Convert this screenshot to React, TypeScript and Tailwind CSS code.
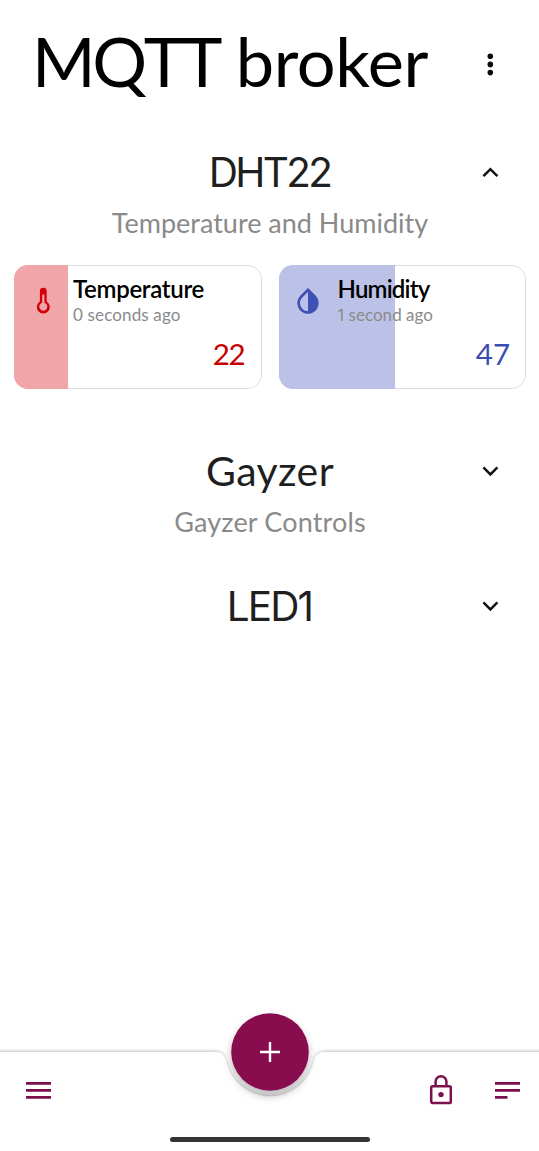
import type { ReactNode } from 'react';

function Chevron({ up = false }: { up?: boolean }) {
  return (
    <svg width="20" height="14" viewBox="0 0 20 14" fill="none" stroke="#111" strokeWidth="2.5">
      <path d={up ? 'M3.4 11.2 L10.4 4.2 L17.4 11.2' : 'M3.4 3.4 L10.4 10.4 L17.4 3.4'} />
    </svg>
  );
}

function GroupHeader({ title, subtitle, open = false }: { title: ReactNode; subtitle?: ReactNode; open?: boolean }) {
  return (
    <header className="text-center">
      <div className="flex h-[50px] items-center">
        <div className="w-[98px] shrink-0" />
        <h2 className="grow whitespace-nowrap pt-[3px] text-[41px] leading-[50px] text-[#1f1f1f]">{title}</h2>
        <button className="flex w-[98px] shrink-0 justify-center pt-1" aria-label="Toggle">
          <Chevron up={open} />
        </button>
      </div>
      {subtitle && <p className="mt-2.5 pl-px text-[27px] leading-9 text-[#8a8a8a]">{subtitle}</p>}
    </header>
  );
}

type CardProps = {
  name: ReactNode;
  age: ReactNode;
  value: ReactNode;
  icon: ReactNode;
  fill: string;
  valueColor: string;
};

function Card({ name, age, value, icon, fill, valueColor }: CardProps) {
  return (
    <article className="relative h-[124px] w-[247.5px] overflow-hidden rounded-[14px]">
      <div className="absolute inset-0 rounded-[14px] border border-[#dcdcdc]" />
      <div className={`absolute inset-y-0 left-0 ${fill}`} />
      <div className="relative flex h-full">
        <div className="flex w-[59px] justify-center pt-5">{icon}</div>
        <div className="flex grow flex-col whitespace-nowrap pt-2.5">
          <h3 className="text-[24px] font-semibold leading-[28px] text-black">{name}</h3>
          <p className="mt-0.5 text-[17px] leading-[20px] text-[#8a8a8a]">{age}</p>
          <p className={`mt-3 text-right text-[29.5px] leading-[34px] ${valueColor}`}>{value}</p>
        </div>
      </div>
    </article>
  );
}

export default function App() {
  return (
    <div className="flex h-[1151px] w-[539px] flex-col overflow-hidden bg-white font-['Lato','Inter',sans-serif]">
      <div className="flex h-[145px] items-start">
        <h1 className="w-[441px] whitespace-nowrap pl-[32px] pt-[21px] text-[68.5px] leading-[80px] text-black">
          <span className="tracking-[-3.4px]">MQ</span>
          <span className="tracking-[-2px]">TT</span>
          <span className="tracking-[-2.4px]"> </span>
          <span className="tracking-[-0.4px]">broker</span>
        </h1>
        <button className="flex w-[98px] justify-center pt-[50px]" aria-label="More">
          <svg width="8" height="28" viewBox="0 0 8 28" fill="#0a0a0a">
            <circle cx="4.3" cy="6.2" r="2.8" />
            <circle cx="4.3" cy="14.4" r="2.8" />
            <circle cx="4.3" cy="22.6" r="2.8" />
          </svg>
        </button>
      </div>

      <section>
        <GroupHeader
          open
          title={<span className="relative top-px font-['Inter'] text-[40.5px] tracking-[-2.7px]">DHT22</span>}
          subtitle="Temperature and Humidity"
        />
        <div className="mt-6 flex justify-between pl-3.5 pr-[13px]">
          <Card
            name={<span className="tracking-[-0.3px]">Temperature</span>}
            age={<span className="tracking-[0.15px]">0 seconds ago</span>}
            value={<span className="pr-[17px] tracking-[-1.2px]">22</span>}
            fill="w-[54px] bg-[#f0a6a8]"
            valueColor="text-[#c80000]"
            icon={
              <svg width="32" height="32" viewBox="0 0 32 32">
                <path
                  d="M11.9 16.4 V6.2 a3.4 3.4 0 0 1 6.8 0 V16.4 a6.5 6.5 0 1 1 -6.8 0 Z M14.2 9.6 V17.8 a4 4 0 1 0 2.2 0 V9.6 Z"
                  fill="#d50008"
                  fillRule="evenodd"
                />
              </svg>
            }
          />
          <Card
            name={<span className="tracking-[-0.8px]">Humidity</span>}
            age={
              <span className="tracking-[0.05px]">
                <span className="font-['Inter'] text-[16px]">1</span> second ago
              </span>
            }
            value={<span className="pr-[16px]">47</span>}
            fill="w-[116.5px] bg-[#bcc2e7]"
            valueColor="text-[#3a4db0]"
            icon={
              <svg width="32" height="32" viewBox="0 0 24 24" fill="#3f51b5">
                <path d="M17.66 7.93 12 2.27 6.34 7.93c-3.12 3.12-3.12 8.19 0 11.31C7.9 20.8 9.95 21.58 12 21.58s4.1-.78 5.66-2.34c3.12-3.12 3.12-8.19 0-11.31zM12 19.59c-1.6 0-3.11-.62-4.24-1.76C6.62 16.69 6 15.19 6 13.59s.62-3.11 1.76-4.24L12 5.1v14.49z" />
              </svg>
            }
          />
        </div>
      </section>

      <section className="mt-[55px]">
        <GroupHeader
          title={<span className="pl-px tracking-[0.4px]">Gayzer</span>}
          subtitle={<span className="tracking-[0.15px]">Gayzer Controls</span>}
        />
      </section>

      <section className="mt-[39px]">
        <GroupHeader title={<span className="relative top-px font-['Inter'] text-[40.5px] tracking-[-1.9px]">LED1</span>} />
      </section>

      <footer className="relative mt-auto flex h-[151px] flex-col">
        <svg className="absolute inset-0" width="539" height="151" viewBox="0 0 539 151">
          <defs>
            <filter id="barShadow" x="-5%" y="-20%" width="110%" height="140%">
              <feDropShadow dx="0" dy="-1.2" stdDeviation="1.8" floodColor="#000" floodOpacity="0.22" />
            </filter>
            <filter id="fabShadow" x="-40%" y="-40%" width="180%" height="180%">
              <feDropShadow dx="0" dy="5" stdDeviation="4.5" floodColor="#000" floodOpacity="0.28" />
            </filter>
          </defs>
          <path
            d="M-10 52 H214 C222 52 224 55 226 61 A45 45 0 0 0 314 61 C316 55 318 52 326 52 H549 V170 H-10 Z"
            fill="#fff"
            filter="url(#barShadow)"
          />
          <circle cx="270" cy="52" r="38.8" fill="#880e4f" filter="url(#fabShadow)" />
          <path d="M260 52 H280 M270 42 V62" stroke="#fff" strokeWidth="2.4" />
        </svg>
        <nav className="relative flex h-[136.5px] items-start pl-[26px] pr-[19.5px] pt-[73px]">
          <svg width="25" height="34" viewBox="0 0 25 34" stroke="#7c104c" strokeWidth="2.7">
            <path d="M0 10.4 H25 M0 17.4 H25 M0 24.4 H25" />
          </svg>
          <svg className="ml-auto" width="24" height="34" viewBox="0 0 24 34" fill="none" stroke="#7c104c" strokeWidth="2.5">
            <rect x="2.2" y="13.2" width="19.6" height="16.8" rx="1.6" />
            <path d="M6.6 13 V8.6 a5.4 5.4 0 0 1 10.8 0 V13" />
            <circle cx="12" cy="21.6" r="2.7" fill="#7c104c" stroke="none" />
          </svg>
          <svg className="ml-[41.5px]" width="25" height="34" viewBox="0 0 25 34" stroke="#7c104c" strokeWidth="2.7">
            <path d="M0 10.4 H25 M0 17.4 H25 M0 24.4 H12.5" />
          </svg>
        </nav>
        <div className="relative mx-auto h-[5px] w-[200px] rounded-full bg-[#333]" />
      </footer>
    </div>
  );
}
